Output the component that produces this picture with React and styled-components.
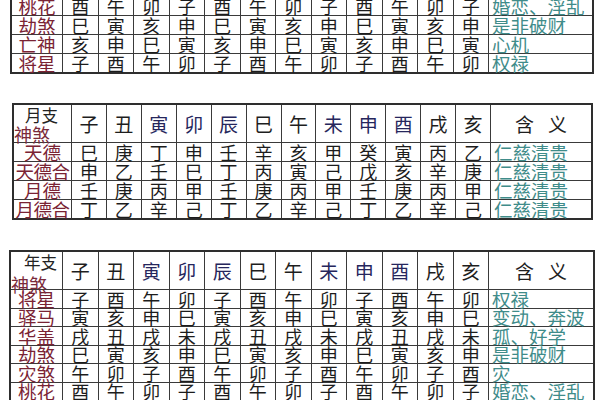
import React from 'react';
import styled, { createGlobalStyle } from 'styled-components';

const GlobalStyle = createGlobalStyle`
  html, body {
    margin: 0;
    padding: 0;
    background: #ffffff;
  }
  body {
    font-family: 'Noto Sans CJK SC', 'Noto Sans', sans-serif;
  }
`;

const BRANCHES = ['子', '丑', '寅', '卯', '辰', '巳', '午', '未', '申', '酉', '戌', '亥'];
const BLUE_HEADS = ['寅', '卯', '辰', '未', '申', '酉'];

const Page = styled.div`
  width: 600px;
  height: 400px;
  overflow: hidden;
  display: flex;
  flex-direction: column;
  padding-left: 9px;
  box-sizing: border-box;
`;

const Table = styled.div`
  display: grid;
  grid-template-columns: ${(p) => p.$label}px repeat(12, 1fr) ${(p) => p.$meaning}px;
  grid-template-rows: ${(p) => (p.$head ? `${p.$head}px` : 'none')};
  grid-auto-rows: ${(p) => p.$row}px;
  gap: 1px;
  width: ${(p) => p.$width}px;
  margin-top: ${(p) => p.$top}px;
  margin-left: ${(p) => p.$shift || 0}px;
  background: #3a3a3a;
  border: 2px solid #2e2e2e;
  box-sizing: content-box;
  flex-shrink: 0;
`;

const Cell = styled.div`
  background: #ffffff;
  display: flex;
  align-items: center;
  justify-content: center;
  white-space: nowrap;
`;

const Corner = styled(Cell)`
  grid-row: 1;
  grid-column: 1;
  position: relative;
  z-index: 1;
  background: transparent;
`;

const CornerBg = styled(Cell)`
  grid-row: 1;
  grid-column: 1;
`;

const CornerTop = styled.span`
  position: absolute;
  top: 1px;
  right: ${(p) => p.$right}px;
  font-size: 16.5px;
  line-height: 18px;
  color: #222;
`;

const CornerBottom = styled.span`
  position: absolute;
  left: 0;
  bottom: ${(p) => p.$bottom}px;
  font-size: 18px;
  line-height: 18px;
  color: #7a2a3a;
`;

const HeadCell = styled(Cell)`
  font-size: 19px;
  color: ${(p) => (p.$blue ? '#26265c' : '#1e1e1e')};
`;

const MeaningHead = styled(Cell)`
  font-size: 19px;
  color: #1e1e1e;
  letter-spacing: 14px;
  padding-left: 14px;
`;

const LabelCell = styled(Cell)`
  font-size: 18.5px;
  line-height: 1;
  color: #7a2334;
  letter-spacing: ${(p) => (p.$tight ? '-0.5px' : '0')};
`;

const DataCell = styled(Cell)`
  font-size: 18px;
  line-height: 1;
  color: #1c1c1c;
`;

const MeaningCell = styled(Cell)`
  justify-content: flex-start;
  padding-left: 3px;
  font-size: 18.5px;
  line-height: 1;
  color: #3f8c8a;
`;

const Gap = styled.div`
  height: ${(p) => p.$h}px;
  flex-shrink: 0;
`;

const cycle = (seq) => Array.from({ length: 12 }, (_, i) => seq[i % seq.length]);

const tableOne = [
  { name: '桃花', values: cycle(['酉', '午', '卯', '子']), meaning: '婚恋、淫乱' },
  { name: '劫煞', values: cycle(['巳', '寅', '亥', '申']), meaning: '是非破财' },
  { name: '亡神', values: cycle(['亥', '申', '巳', '寅']), meaning: '心机' },
  { name: '将星', values: cycle(['子', '酉', '午', '卯']), meaning: '权禄' },
];

const tableTwo = [
  {
    name: '天德',
    values: ['巳', '庚', '丁', '申', '壬', '辛', '亥', '甲', '癸', '寅', '丙', '乙'],
    meaning: '仁慈清贵',
  },
  {
    name: '天德合',
    values: ['申', '乙', '壬', '巳', '丁', '丙', '寅', '己', '戊', '亥', '辛', '庚'],
    meaning: '仁慈清贵',
  },
  { name: '月德', values: cycle(['壬', '庚', '丙', '甲']), meaning: '仁慈清贵' },
  { name: '月德合', values: cycle(['丁', '乙', '辛', '己']), meaning: '仁慈清贵' },
];

const tableThree = [
  { name: '将星', values: cycle(['子', '酉', '午', '卯']), meaning: '权禄' },
  { name: '驿马', values: cycle(['寅', '亥', '申', '巳']), meaning: '变动、奔波' },
  { name: '华盖', values: cycle(['戌', '丑', '戌', '未']), meaning: '孤、好学' },
  { name: '劫煞', values: cycle(['巳', '寅', '亥', '申']), meaning: '是非破财' },
  { name: '灾煞', values: cycle(['午', '卯', '子', '酉']), meaning: '灾' },
  { name: '桃花', values: cycle(['酉', '午', '卯', '子']), meaning: '婚恋、淫乱' },
  { name: '亡神', values: cycle(['亥', '申', '巳', '寅']), meaning: '心机' },
];

const Header = ({ branchLabel, topRight, bottom }) => (
  <>
    <CornerBg />
    <Corner>
      <CornerTop $right={topRight}>{branchLabel}</CornerTop>
      <CornerBottom $bottom={bottom}>神煞</CornerBottom>
    </Corner>
    {BRANCHES.map((b) => (
      <HeadCell key={b} $blue={BLUE_HEADS.includes(b)}>
        {b}
      </HeadCell>
    ))}
    <MeaningHead>含义</MeaningHead>
  </>
);

const Rows = ({ rows }) =>
  rows.map((r) => (
    <React.Fragment key={r.name}>
      <LabelCell $tight={r.name.length > 2}>{r.name}</LabelCell>
      {r.values.map((v, i) => (
        <DataCell key={i}>{v}</DataCell>
      ))}
      <MeaningCell>{r.meaning}</MeaningCell>
    </React.Fragment>
  ));

export default function App() {
  return (
    <>
      <GlobalStyle />
      <Page>
        <Table $label={50} $meaning={103} $row={18} $width={580} $top={-5} $shift={1}>
          <Rows rows={tableOne} />
        </Table>
        <Gap $h={29} />
        <Table $label={57} $meaning={100} $head={37} $row={18} $width={577} $shift={3}>
          <Header branchLabel="月支" topRight={13} bottom={-1} />
          <Rows rows={tableTwo} />
        </Table>
        <Gap $h={30} />
        <Table $label={51} $meaning={104} $head={37} $row={17.5} $width={582} $shift={0}>
          <Header branchLabel="年支" topRight={5} bottom={-4} />
          <Rows rows={tableThree} />
        </Table>
      </Page>
    </>
  );
}
